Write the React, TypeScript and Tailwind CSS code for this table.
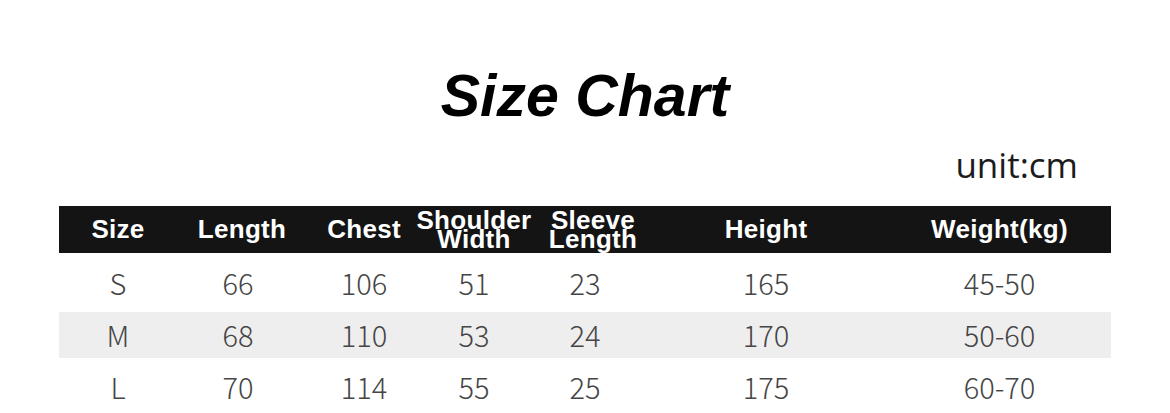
import React from "react";

const headFont = { fontFamily: '"Liberation Sans", Arial, sans-serif' };

const rows = [
  ["S", "66", "106", "51", "23", "165", "45-50"],
  ["M", "68", "110", "53", "24", "170", "50-60"],
  ["L", "70", "114", "55", "25", "175", "60-70"],
];

const grid = "grid grid-cols-[118px_126px_122px_98px_130px_226px_233px]";

function DataRow({ cells, cls }: { cells: string[]; cls: string }) {
  return (
    <div className={`${grid} ${cls} text-[29px] leading-[29px] font-light text-[#454545] font-['Noto_Sans_CJK_SC',sans-serif]`}>
      <div className="flex justify-center">{cells[0]}</div>
      <div className="flex justify-center pr-[4px]">{cells[1]}</div>
      <div className="flex justify-center">{cells[2]}</div>
      <div className="flex justify-center">{cells[3]}</div>
      <div className="flex justify-center pr-[6px]">{cells[4]}</div>
      <div className="flex justify-center">{cells[5]}</div>
      <div className="flex justify-center pl-[8px]">{cells[6]}</div>
    </div>
  );
}

export default function App() {
  return (
    <div className="w-[1170px] h-[413px] bg-white overflow-hidden">
      <h1
        className="pt-[67px] text-center text-[59px] leading-[59px] font-bold italic text-black"
        style={headFont}
      >
        Size Chart
      </h1>
      <div className="flex justify-end pr-[92px] mt-[21px]">
        <span className="text-[35px] leading-[35px] text-[#1c1c1c] font-['Open_Sans',sans-serif]">
          unit:cm
        </span>
      </div>
      <div className="mx-[59px] mt-[24px]">
        <div
          className={`${grid} h-[47px] bg-[#141414] text-white font-bold text-[26px] tracking-[0.3px] items-center`}
          style={headFont}
        >
          <div className="flex justify-center">Size</div>
          <div className="flex justify-center pl-[4px]">Length</div>
          <div className="flex justify-center">Chest</div>
          <div className="flex flex-col items-center leading-[19px]">
            <span>Shoulder</span>
            <span>Width</span>
          </div>
          <div className="flex flex-col items-center leading-[19px] pl-[10px]">
            <span>Sleeve</span>
            <span>Length</span>
          </div>
          <div className="flex justify-center">Height</div>
          <div className="flex justify-center pl-[8px]">Weight(kg)</div>
        </div>
        <DataRow cells={rows[0]} cls="h-[59px] pt-[15px]" />
        <DataRow cells={rows[1]} cls="h-[46px] pt-[8px] bg-[#efeeef]" />
        <DataRow cells={rows[2]} cls="h-[55px] pt-[14px]" />
      </div>
    </div>
  );
}
